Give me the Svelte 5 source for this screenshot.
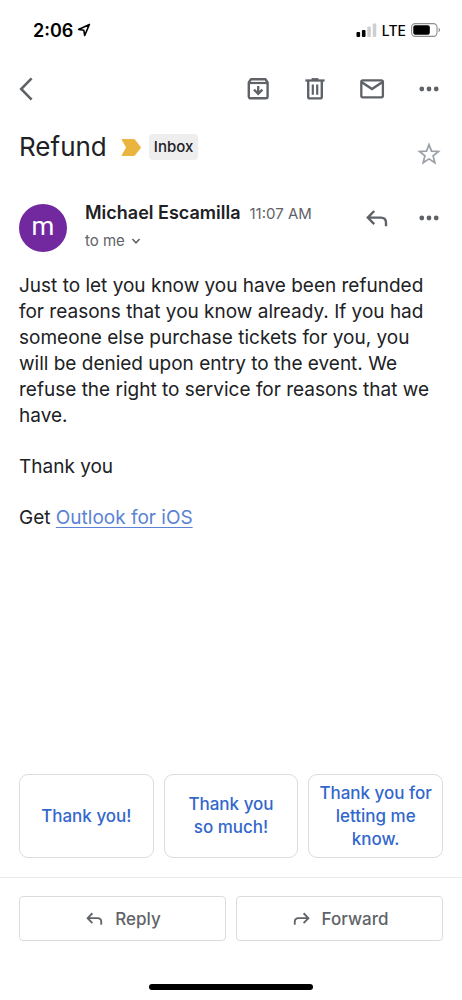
<script lang="ts">
  const paragraphs = [
    'Just to let you know you have been refunded for reasons that you know already. If you had someone else purchase tickets for you, you will be denied upon entry to the event. We refuse the right to service for reasons that we have.',
    'Thank you'
  ];

  // non-breaking space keeps "so much!" together on the second line
  const smartReplies = ['Thank you!', 'Thank you so\u00a0much!', 'Thank you for letting me know.'];

  let starred = $state(false);
</script>

{#snippet dots()}
  <svg class="icon" viewBox="0 0 28 28" aria-hidden="true">
    <circle cx="6.8" cy="14" r="2.4" fill="currentColor" />
    <circle cx="14" cy="14" r="2.4" fill="currentColor" />
    <circle cx="21.2" cy="14" r="2.4" fill="currentColor" />
  </svg>
{/snippet}

{#snippet replyArrow()}
  <path d="M11.2 7 4.8 13.6l6.4 6.6M5 13.6h12.8c3.4 0 5.2 1.8 5.2 5v3.6" fill="none" stroke="currentColor" stroke-width="2.4" />
{/snippet}

<div class="screen">
  <div class="status-bar">
    <div class="clock">
      <span>2:06</span>
      <svg class="location" viewBox="0 0 14 14" aria-hidden="true">
        <path d="M12.4 1.4 1.6 6.4l5.2.8.9 5.300z" fill="none" stroke="currentColor" stroke-width="1.6" stroke-linejoin="round" />
      </svg>
    </div>
    <div class="signal">
      <svg class="bars" viewBox="0 0 21 14" aria-hidden="true">
        <rect x="0.5" y="9" width="3.6" height="5" rx="1" fill="#000" />
        <rect x="5.9" y="7" width="3.6" height="7" rx="1" fill="#000" />
        <rect x="11.3" y="3.6" width="3.6" height="10.4" rx="1" fill="#cfcfcf" />
        <rect x="16.7" y="0.5" width="3.6" height="13.5" rx="1" fill="#cfcfcf" />
      </svg>
      <span>LTE</span>
      <svg class="battery" viewBox="0 0 30 14" aria-hidden="true">
        <rect x="0.6" y="0.6" width="25.4" height="12.8" rx="3.6" fill="none" stroke="#8e8e8e" stroke-width="1.1" />
        <rect x="2.3" y="2.3" width="16.5" height="9.4" rx="2" fill="#000" />
        <path d="M27.6 4.8c1.9.7 1.9 3.7 0 4.400z" fill="#8e8e8e" />
      </svg>
    </div>
  </div>

  <header class="toolbar">
    <button class="icon-button back" type="button" aria-label="Back">
      <svg class="icon" viewBox="0 0 28 28" aria-hidden="true">
        <path d="M12.6 3.4 2.200 14l10.4 10.6" fill="none" stroke="currentColor" stroke-width="2.6" />
      </svg>
    </button>
    <button class="icon-button" type="button" aria-label="Archive">
      <svg class="icon" viewBox="0 0 28 28" aria-hidden="true">
        <path d="M4.8 7.4 7 4.2h14.4l2.2 3.2v14.2a1.7 1.7 0 0 1-1.7 1.7H6.5a1.7 1.7 0 0 1-1.7-1.7z" fill="none" stroke="currentColor" stroke-width="2.4" stroke-linejoin="round" />
        <path d="M4.8 8h18.8" fill="none" stroke="currentColor" stroke-width="2.2" />
        <path d="M14.2 11v8M10 14.6l4.2 4.2 4.2-4.2" fill="none" stroke="currentColor" stroke-width="2.3" />
      </svg>
    </button>
    <button class="icon-button" type="button" aria-label="Delete">
      <svg class="icon" viewBox="0 0 28 28" aria-hidden="true">
        <path d="M4.4 5.5h19.2" fill="none" stroke="currentColor" stroke-width="2.3" />
        <path d="M10.6 4.2h6.8" fill="none" stroke="currentColor" stroke-width="2.2" />
        <path d="M7.2 5.5v16.2a1.7 1.7 0 0 0 1.7 1.7h10.2a1.7 1.7 0 0 0 1.7-1.7V5.5" fill="none" stroke="currentColor" stroke-width="2.4" />
        <path d="M11.8 9.400v10.4M16.2 9.400v10.4" fill="none" stroke="currentColor" stroke-width="2.2" />
      </svg>
    </button>
    <button class="icon-button" type="button" aria-label="Mark as unread">
      <svg class="icon" viewBox="0 0 28 28" aria-hidden="true">
        <rect x="3.3" y="5.4" width="21.6" height="17" rx="1.6" fill="none" stroke="currentColor" stroke-width="2.3" />
        <path d="m3.8 7.2 10.2 6.800 10.2-6.800" fill="none" stroke="currentColor" stroke-width="2.5" />
      </svg>
    </button>
    <button class="icon-button" type="button" aria-label="More options">
      {@render dots()}
    </button>
  </header>

  <main>
    <div class="subject-row">
      <h1>Refund</h1>
      <svg class="importance" viewBox="0 0 20 17" role="img" aria-label="Important">
        <path d="M1.4 0H12.5a2 2 0 0 1 1.6.8L19.4 7.500a1.5 1.5 0 0 1 0 2L14.1 16.2a2 2 0 0 1-1.6.8H1.4a.7.7 0 0 1-.6-1.100L5 8.500.8 1.100A.7.7 0 0 1 1.4 0z" fill="#eab53f" />
      </svg>
      <span class="label">Inbox</span>
      <button class="icon-button star" type="button" aria-label="Star" aria-pressed={starred} onclick={() => (starred = !starred)}>
        <svg class="icon" viewBox="0 0 28 28" aria-hidden="true">
          <path d="m14 4.600 2.500 6.500 7 .4-5.400 4.400 1.800 6.900-5.900-3.900-5.900 3.900 1.800-6.900-5.400-4.400 7-.4z" fill={starred ? 'currentColor' : 'none'} stroke="currentColor" stroke-width="1.7" />
        </svg>
      </button>
    </div>

    <div class="sender-row">
      <div class="avatar">m</div>
      <div class="sender">
        <div class="sender-line">
          <span class="name">Michael Escamilla</span>
          <time>11:07 AM</time>
        </div>
        <button class="recipients" type="button">
          to me
          <svg class="chevron" viewBox="0 0 10 10" aria-hidden="true">
            <path d="m1.4 3 3.6 3.8L8.6 3" fill="none" stroke="currentColor" stroke-width="1.5" />
          </svg>
        </button>
      </div>
      <div class="sender-actions">
        <button class="icon-button" type="button" aria-label="Reply">
          <svg class="icon" viewBox="0 0 28 28" aria-hidden="true">{@render replyArrow()}</svg>
        </button>
        <button class="icon-button" type="button" aria-label="More message options">
          {@render dots()}
        </button>
      </div>
    </div>

    <div class="message">
      {#each paragraphs as paragraph}
        <p>{paragraph}</p>
      {/each}
      <p>Get <a href="https://aka.ms/o0ukef">Outlook for iOS</a></p>
    </div>
  </main>

  <div class="smart-replies">
    {#each smartReplies as reply}
      <button type="button">{reply}</button>
    {/each}
  </div>

  <footer class="actions">
    <button type="button">
      <svg class="small-icon" viewBox="0 0 28 28" aria-hidden="true">{@render replyArrow()}</svg>
      Reply
    </button>
    <button type="button">
      <svg class="small-icon flipped" viewBox="0 0 28 28" aria-hidden="true">{@render replyArrow()}</svg>
      Forward
    </button>
  </footer>

  <div class="home-indicator"></div>
</div>

<style>
  :global(body) {
    background: #fff;
  }

  .screen {
    box-sizing: border-box;
    min-height: 100vh;
    display: flex;
    flex-direction: column;
    padding-bottom: 10px;
    background: #fff;
    color: #202124;
    font-family: Inter, Roboto, sans-serif;
  }

  button {
    font-family: inherit;
    margin: 0;
    padding: 0;
    border: none;
    background: none;
    cursor: pointer;
  }

  svg {
    display: block;
    flex: none;
  }

  .status-bar {
    display: flex;
    align-items: center;
    justify-content: space-between;
    height: 60px;
    padding: 0 21px 0 33px;
    color: #000;
  }

  .clock,
  .signal {
    display: flex;
    align-items: center;
    gap: 4px;
  }

  .clock {
    font-size: 18px;
    font-weight: 600;
  }

  .signal {
    gap: 5px;
    font-size: 14px;
    font-weight: 500;
  }

  .location {
    width: 14px;
    height: 14px;
  }

  .bars {
    width: 21px;
    height: 14px;
  }

  .battery {
    width: 30px;
    height: 14px;
  }

  .toolbar {
    display: flex;
    align-items: center;
    gap: 29px;
    height: 58px;
    padding: 0 19px;
  }

  .icon-button {
    color: #5f6368;
  }

  .icon {
    width: 28px;
    height: 28px;
  }

  .back {
    margin-right: auto;
  }

  main {
    flex: 1;
    padding: 0 19px;
  }

  .subject-row {
    display: flex;
    align-items: center;
    height: 58px;
  }

  h1 {
    margin: 0;
    font-size: 26px;
    font-weight: 400;
    line-height: 32px;
  }

  .importance {
    width: 20px;
    height: 17px;
    margin: 0 8px 0 14px;
  }

  .label {
    padding: 0 5px;
    border-radius: 4px;
    background: #eee;
    font-size: 15px;
    font-weight: 500;
    line-height: 26px;
  }

  .star {
    align-self: flex-end;
    margin: 0 0 8px auto;
    color: #9aa0a6;
  }

  .sender-row {
    display: flex;
    align-items: flex-start;
    padding-top: 24px;
  }

  .avatar {
    width: 48px;
    height: 48px;
    margin-top: 4px;
    border-radius: 50%;
    background: #72289f;
    color: #fff;
    font-family: Roboto, sans-serif;
    font-size: 26px;
    line-height: 44px;
    text-align: center;
  }

  .sender {
    flex: 1;
    margin-left: 18px;
  }

  .sender-line {
    display: flex;
    align-items: baseline;
    gap: 9px;
    line-height: 26px;
    white-space: nowrap;
  }

  .name {
    font-size: 18px;
    font-weight: 600;
  }

  time {
    color: #5f6368;
    font-size: 15px;
  }

  .recipients {
    display: flex;
    align-items: center;
    gap: 6px;
    color: #5f6368;
    font-size: 15px;
    line-height: 28px;
  }

  .chevron {
    width: 10px;
    height: 10px;
  }

  .sender-actions {
    display: flex;
    gap: 24px;
    padding-top: 4px;
  }

  .message {
    margin-top: 18px;
    font-size: 19px;
    line-height: 26px;
  }

  .message p {
    margin: 0 0 25px;
  }

  .message a {
    color: #5b82d3;
    text-underline-offset: 3px;
  }

  .smart-replies {
    display: grid;
    grid-template-columns: repeat(3, 1fr);
    gap: 10px;
    padding: 0 19px 19px;
    border-bottom: 1px solid #ebebeb;
  }

  .smart-replies button {
    min-height: 84px;
    padding: 0 10px;
    border: 1px solid #dadce0;
    border-radius: 9px;
    color: #3367cc;
    font-size: 17px;
    font-weight: 500;
    line-height: 23px;
  }

  .actions {
    display: grid;
    grid-template-columns: repeat(2, 1fr);
    gap: 10px;
    padding: 18px 19px 43px;
  }

  .actions button {
    display: flex;
    align-items: center;
    justify-content: center;
    gap: 10px;
    height: 45px;
    border: 1px solid #dadce0;
    border-radius: 4px;
    color: #5f6368;
    font-size: 17px;
    font-weight: 500;
  }

  .small-icon {
    width: 21px;
    height: 21px;
  }

  .flipped {
    transform: scaleX(-1);
  }

  .home-indicator {
    align-self: center;
    width: 164px;
    height: 6px;
    border-radius: 3px;
    background: #000;
  }
</style>
